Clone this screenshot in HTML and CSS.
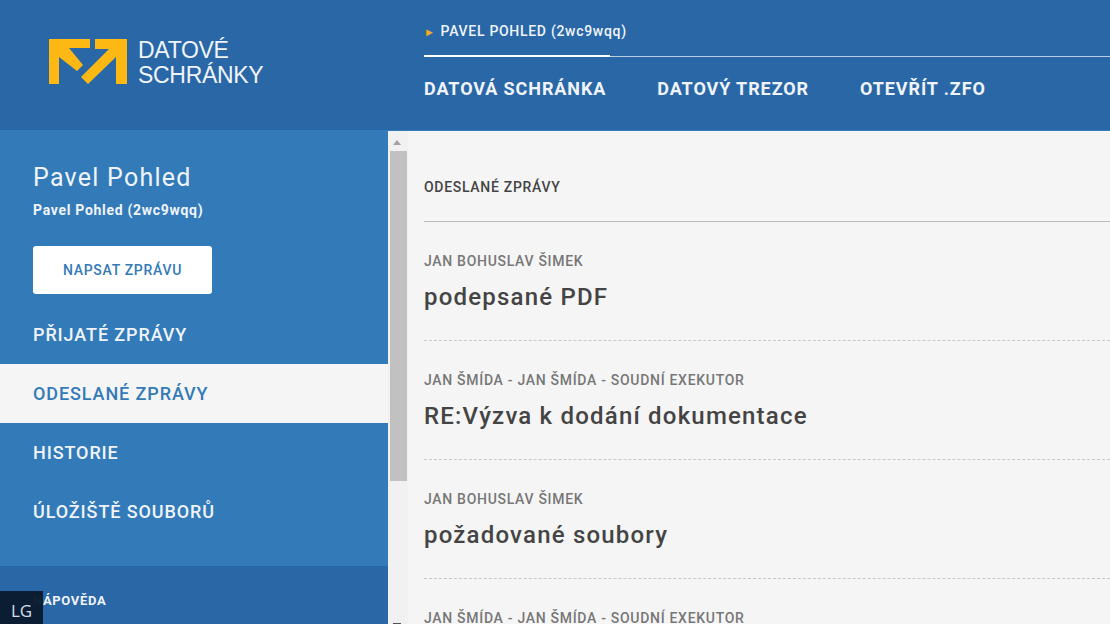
FILE: index.html
```html
<!DOCTYPE html>
<html lang="cs">
<head>
<meta charset="utf-8">
<title>Datové schránky</title>
<link rel="stylesheet" href="styles.css">
</head>
<body>
<header class="top">
  <div class="brand">
    <svg class="brand-mark" width="78" height="45" viewBox="0 0 78 45"><path fill="#fdb813" d="M0 0H41V9H20L34 26 28 32 10 18V45H0Z"/><path fill="#fdb813" d="M46 0H78V45H67V18L39 45 32 38 60 10H46Z"/></svg>
    <div class="brand-text">DATOVÉ<br>SCHRÁNKY</div>
  </div>
  <div class="top-nav">
    <div class="account"><span class="account-arrow">►</span>PAVEL POHLED (2wc9wqq)</div>
    <nav class="tabs">
      <a class="tab tab-active">DATOVÁ SCHRÁNKA</a>
      <a class="tab">DATOVÝ TREZOR</a>
      <a class="tab">OTEVŘÍT .ZFO</a>
    </nav>
  </div>
</header>
<div class="body-row">
  <aside class="side">
    <div class="side-head">
      <div class="side-name">Pavel Pohled</div>
      <div class="side-id">Pavel Pohled (2wc9wqq)</div>
      <a class="compose">NAPSAT ZPRÁVU</a>
    </div>
    <nav class="side-menu">
      <a class="side-item">PŘIJATÉ ZPRÁVY</a>
      <a class="side-item side-current">ODESLANÉ ZPRÁVY</a>
      <a class="side-item">HISTORIE</a>
      <a class="side-item">ÚLOŽIŠTĚ SOUBORŮ</a>
    </nav>
    <div class="side-foot">NÁPOVĚDA</div>
    <div class="lang">LG</div>
  </aside>
  <div class="scroll">
    <span class="scroll-up"></span>
    <span class="scroll-thumb"></span>
    <span class="scroll-down"></span>
  </div>
  <main class="content">
    <h1 class="page-title">ODESLANÉ ZPRÁVY</h1>
    <article class="msg">
      <div class="msg-from">JAN BOHUSLAV ŠIMEK</div>
      <div class="msg-subject">podepsané PDF</div>
    </article>
    <article class="msg">
      <div class="msg-from">JAN ŠMÍDA - JAN ŠMÍDA - SOUDNÍ EXEKUTOR</div>
      <div class="msg-subject">RE:Výzva k dodání dokumentace</div>
    </article>
    <article class="msg">
      <div class="msg-from">JAN BOHUSLAV ŠIMEK</div>
      <div class="msg-subject">požadované soubory</div>
    </article>
    <article class="msg">
      <div class="msg-from">JAN ŠMÍDA - JAN ŠMÍDA - SOUDNÍ EXEKUTOR</div>
    </article>
  </main>
</div>
</body>
</html>
```
FILE: styles.css
```css
* { box-sizing: border-box; }
html, body { margin: 0; height: 624px; overflow: hidden; }
body { font-family: Roboto, sans-serif; background: #f5f5f5; color: #444; }
.top { height: 131px; background: #2a67a7; border-bottom: 1px solid #337ab9; display: flex; }
.brand { width: 424px; padding: 39px 0 0 49px; display: flex; gap: 11px; align-items: flex-start; }
.brand-text { font-family: "Liberation Sans", sans-serif; font-size: 23px; line-height: 25px; color: #f0f4f9; letter-spacing: -0.3px; margin-top: -1px; }
.top-nav { flex: 1; padding-top: 22px; }
.account { font-size: 14px; line-height: 18px; font-weight: 500; letter-spacing: 0.7px; color: #f0f4f9; height: 35px; border-bottom: 1px solid #b9cee3; position: relative; }
.account::after { content: ""; position: absolute; left: 0; bottom: -1px; width: 186px; height: 2px; background: #fff; }
.account-arrow { color: #f0ad1c; font-size: 11px; margin-right: 5px; }
.tabs { display: flex; gap: 51px; padding-top: 21px; }
.tab { font-size: 18px; line-height: 22px; font-weight: 700; letter-spacing: 0.9px; color: #f0f4f9; }
.body-row { display: flex; height: 493px; }
.side { width: 388px; background: #337ab9; position: relative; display: flex; flex-direction: column; flex: none; }
.side-head { padding: 32px 0 0 33px; height: 174px; }
.side-name { font-size: 25px; line-height: 30px; letter-spacing: 1.25px; color: #f0f4f9; }
.side-id { font-size: 14px; line-height: 18px; font-weight: 700; letter-spacing: 0.7px; color: #f0f4f9; margin-top: 8px; }
.compose { display: block; width: 179px; height: 48px; margin-top: 27px; background: #fff; border-radius: 3px; text-align: center; font-size: 14px; line-height: 48px; font-weight: 500; letter-spacing: 0.7px; color: #337ab7; }
.side-menu { display: flex; flex-direction: column; height: 261px; padding-top: 0; }
.side-item { display: block; height: 59px; padding-left: 33px; font-size: 18px; line-height: 59px; font-weight: 500; letter-spacing: 0.9px; color: #f0f4f9; }
.side-current { background: #f5f5f5; color: #337ab7; }
.side-foot { flex: 1; background: #2a67a7; padding: 27px 0 0 33px; font-size: 13px; line-height: 16px; font-weight: 700; letter-spacing: 0.65px; color: #f0f4f9; }
.lang { position: absolute; left: 0; bottom: 0; width: 43px; height: 33px; background: rgba(10, 27, 46, 0.97); color: #d5deea; font-size: 17px; line-height: 40px; text-align: center; font-family: "Open Sans", sans-serif; }
.scroll { width: 20px; flex: none; background: #f1f1f1; position: relative; }
.scroll-up { position: absolute; left: 5px; top: 9px; border: 4px solid transparent; border-top: 0; border-bottom: 5px solid #a3a3a3; }
.scroll-thumb { position: absolute; left: 2px; top: 20px; width: 17px; height: 330px; background: #c1c1c1; }
.scroll-down { position: absolute; left: 5px; bottom: 0; width: 8px; height: 1px; background: #505050; }
.content { flex: 1; padding: 0 0 0 16px; min-width: 0; overflow: hidden; }
.page-title { margin: 0; height: 91px; padding-top: 47px; font-size: 14px; line-height: 18px; font-weight: 500; letter-spacing: 0.7px; color: #444; border-bottom: 1px solid #bbb; }
.msg { height: 119px; padding-top: 30px; border-bottom: 1px dashed #c8c8c8; }
.msg-from { font-size: 14px; line-height: 18px; font-weight: 500; letter-spacing: 0.7px; color: #777; }
.msg-subject { font-size: 24px; line-height: 30px; font-weight: 500; letter-spacing: 1.2px; color: #444; margin-top: 12px; }
```
